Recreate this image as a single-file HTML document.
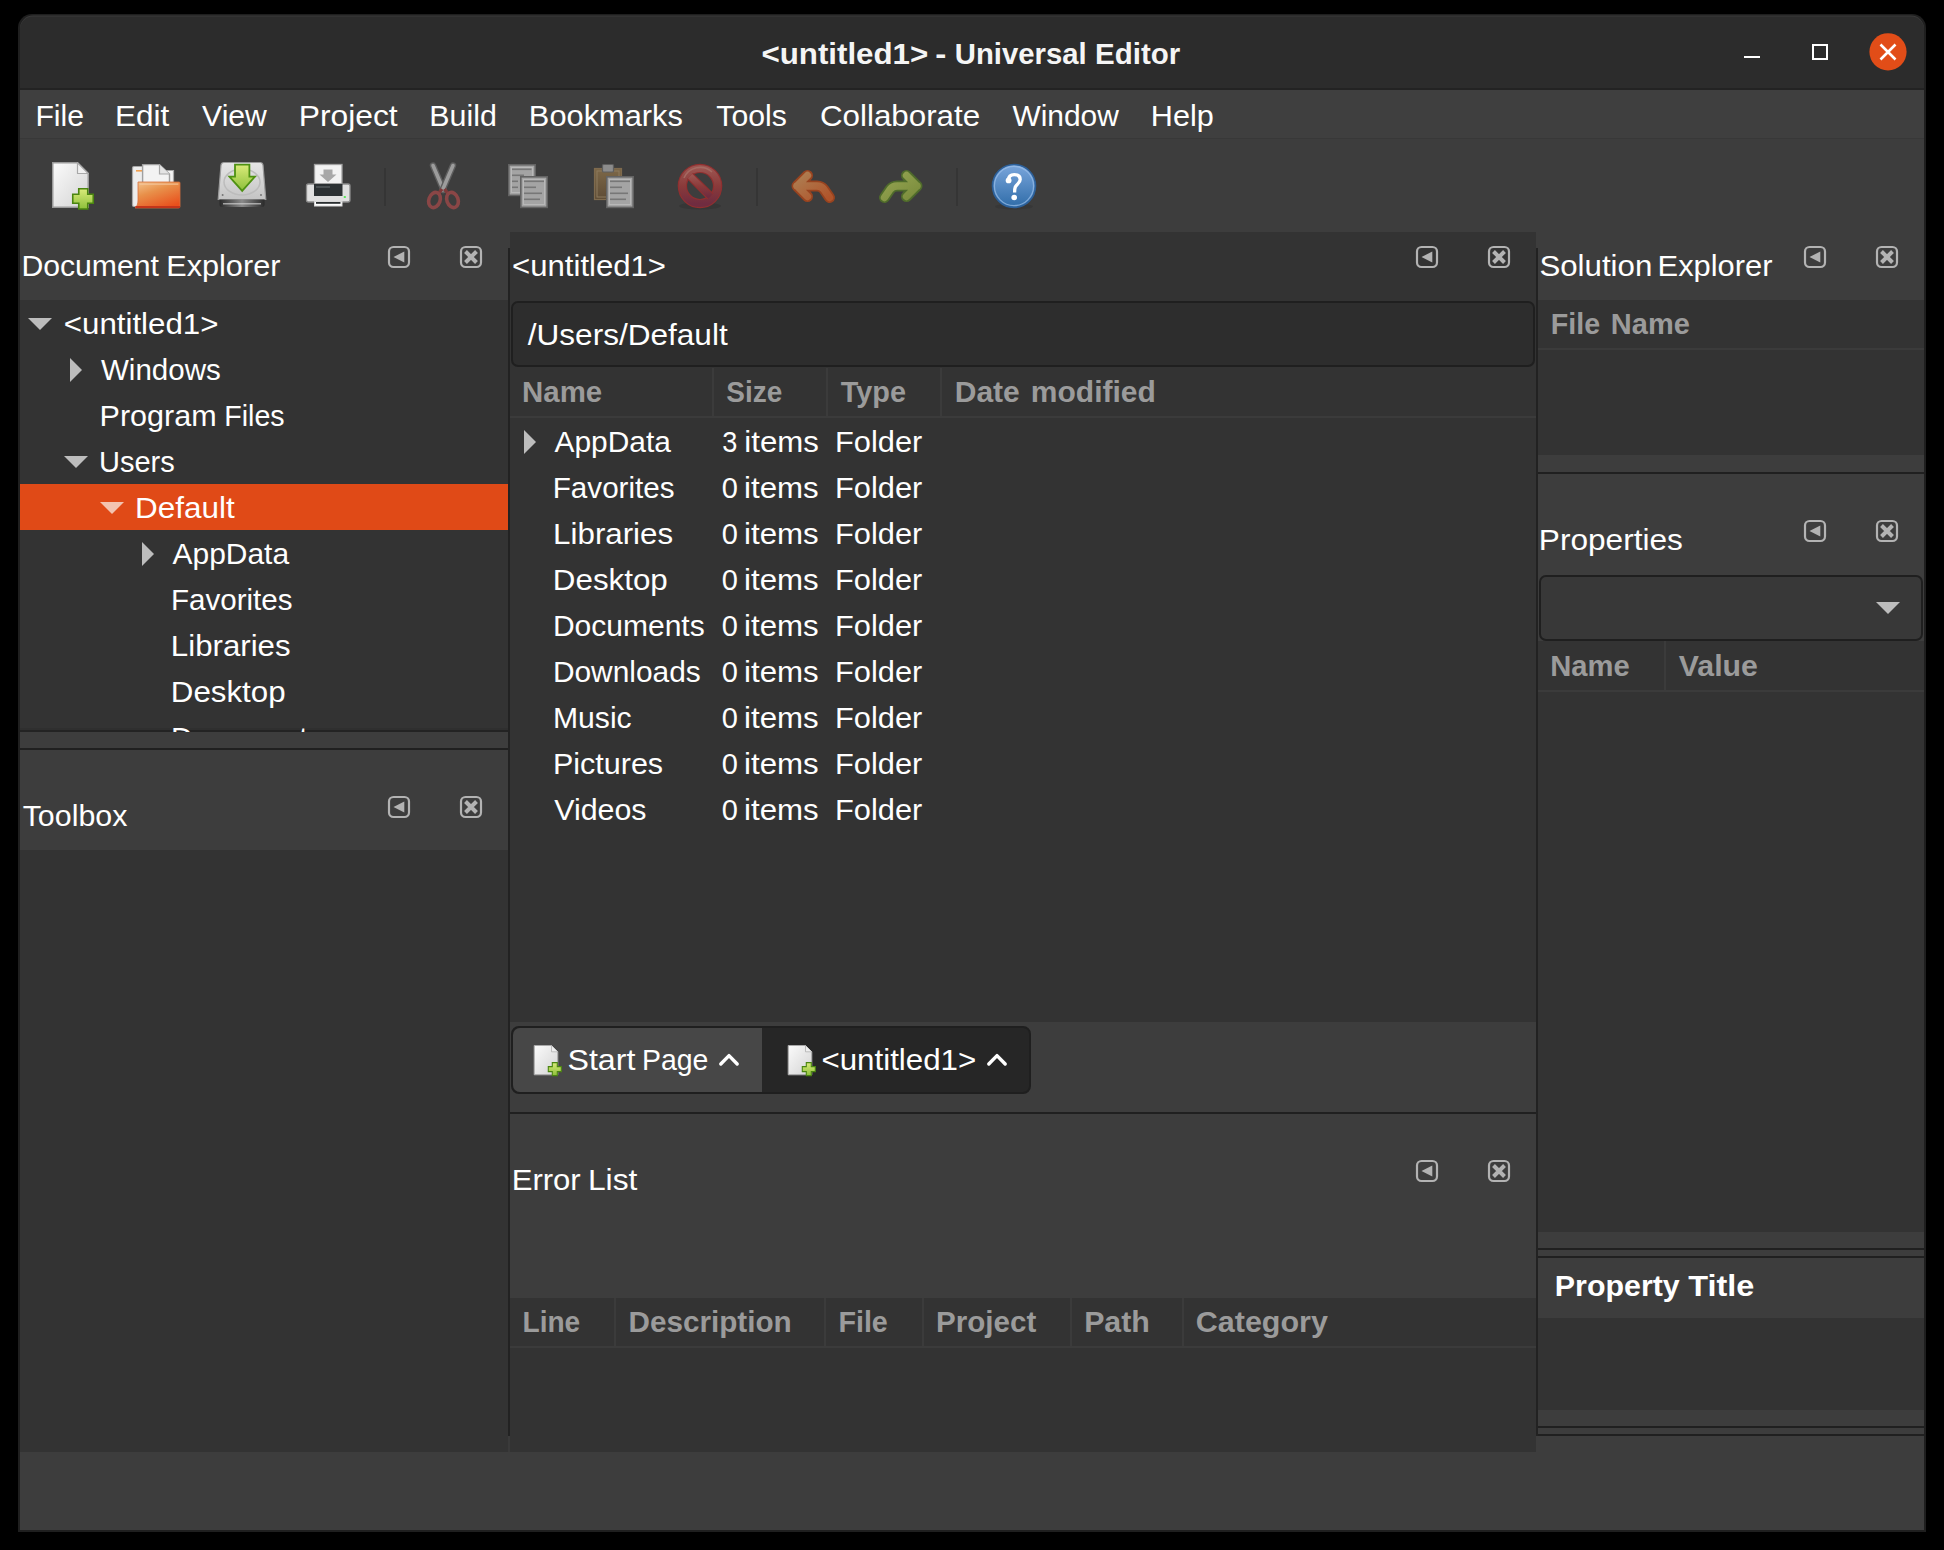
<!DOCTYPE html>
<html><head><meta charset="utf-8"><title>Universal Editor</title>
<style>html,body{margin:0;padding:0;background:#000;overflow:hidden;width:1944px;height:1550px}svg{display:block}</style>
</head><body>
<svg width="1944" height="1550" viewBox="0 0 1944 1550">
<defs><clipPath id="treeclip"><rect x="20" y="300" width="488" height="432"/></clipPath></defs>
<rect x="0" y="0" width="1944" height="1550" fill="#000"/>
<path d="M18,28 a14,14 0 0 1 14,-14 H1912 a14,14 0 0 1 14,14 V1532 H18 Z" fill="#1f1f1f"/>
<path d="M20,29.5 a13,13 0 0 1 13,-14 H1911 a13,13 0 0 1 13,14 V88 H20 Z" fill="#3a3a3a"/>
<path d="M20,30.5 a13,13 0 0 1 13,-14 H1911 a13,13 0 0 1 13,14 V88 H20 Z" fill="#2c2c2c"/>
<rect x="20" y="88" width="1904" height="2" fill="#232323"/>
<rect x="20" y="90" width="1904" height="48" fill="#3f3f3f"/>
<rect x="20" y="138" width="1904" height="1" fill="#383838"/>
<rect x="20" y="139" width="1904" height="1391" fill="#3d3d3d"/>
<rect x="20" y="300" width="488" height="430" fill="#333333"/>
<rect x="20" y="728" width="488" height="2" fill="#2f2f2f"/>
<rect x="20" y="730" width="488" height="2" fill="#232323"/>
<rect x="20" y="748" width="488" height="2" fill="#202020"/>
<rect x="20" y="850" width="488" height="602" fill="#333333"/>
<rect x="20" y="484" width="488" height="46" fill="#e04a17"/>
<rect x="508" y="248" width="2" height="1188" fill="#222222"/>
<rect x="508" y="1436" width="2" height="16" fill="#3a3a3a"/>
<rect x="510" y="232" width="1026" height="790" fill="#333333"/>
<rect x="512" y="302" width="1022" height="64" rx="6" fill="#2d2d2d" stroke="#1f1f1f" stroke-width="2"/>
<rect x="712" y="368" width="2" height="48" fill="#3b3b3b"/>
<rect x="826" y="368" width="2" height="48" fill="#3b3b3b"/>
<rect x="940" y="368" width="2" height="48" fill="#3b3b3b"/>
<rect x="510" y="416" width="1026" height="2" fill="#3b3b3b"/>
<rect x="512" y="1027" width="518" height="66" rx="7" fill="#262626" stroke="#1f1f1f" stroke-width="2"/>
<path d="M762,1028 H520 a7,7 0 0 0 -7,7 V1085 a7,7 0 0 0 7,7 H762 Z" fill="#474747"/>
<rect x="510" y="1112" width="1026" height="2" fill="#202020"/>
<rect x="510" y="1298" width="1026" height="154" fill="#333333"/>
<rect x="614" y="1298" width="2" height="48" fill="#3b3b3b"/>
<rect x="824" y="1298" width="2" height="48" fill="#3b3b3b"/>
<rect x="922" y="1298" width="2" height="48" fill="#3b3b3b"/>
<rect x="1070" y="1298" width="2" height="48" fill="#3b3b3b"/>
<rect x="1182" y="1298" width="2" height="48" fill="#3b3b3b"/>
<rect x="510" y="1346" width="1026" height="2" fill="#3b3b3b"/>
<rect x="1536" y="248" width="2" height="1188" fill="#222222"/>
<rect x="1538" y="300" width="386" height="155" fill="#333333"/>
<rect x="1538" y="348" width="386" height="2" fill="#3b3b3b"/>
<rect x="1538" y="472" width="386" height="2" fill="#202020"/>
<rect x="1540" y="576" width="382" height="64" rx="6" fill="#383838" stroke="#1f1f1f" stroke-width="2"/>
<rect x="1538" y="641" width="386" height="591" fill="#333333"/>
<rect x="1664" y="641" width="2" height="49" fill="#3b3b3b"/>
<rect x="1538" y="690" width="386" height="2" fill="#3b3b3b"/>
<rect x="1538" y="1248" width="386" height="2" fill="#202020"/>
<rect x="1538" y="1256" width="386" height="2" fill="#202020"/>
<rect x="1538" y="1318" width="386" height="92" fill="#333333"/>
<rect x="1538" y="1426" width="386" height="2" fill="#202020"/>
<rect x="1538" y="1434" width="386" height="2" fill="#202020"/>
<rect x="389" y="247" width="20" height="20" rx="4.5" fill="none" stroke="#b3b3b3" stroke-width="2.2"/><path d="M393.5,257 L404.3,251.5 L404.3,262.5 Z" fill="#b3b3b3"/><rect x="461" y="247" width="20" height="20" rx="4.5" fill="none" stroke="#b3b3b3" stroke-width="2.2"/><path d="M465.5,251.5 L476.5,262.5 M476.5,251.5 L465.5,262.5" stroke="#b3b3b3" stroke-width="4"/>
<rect x="389" y="797" width="20" height="20" rx="4.5" fill="none" stroke="#b3b3b3" stroke-width="2.2"/><path d="M393.5,807 L404.3,801.5 L404.3,812.5 Z" fill="#b3b3b3"/><rect x="461" y="797" width="20" height="20" rx="4.5" fill="none" stroke="#b3b3b3" stroke-width="2.2"/><path d="M465.5,801.5 L476.5,812.5 M476.5,801.5 L465.5,812.5" stroke="#b3b3b3" stroke-width="4"/>
<rect x="1417" y="247" width="20" height="20" rx="4.5" fill="none" stroke="#b3b3b3" stroke-width="2.2"/><path d="M1421.5,257 L1432.3,251.5 L1432.3,262.5 Z" fill="#b3b3b3"/><rect x="1489" y="247" width="20" height="20" rx="4.5" fill="none" stroke="#b3b3b3" stroke-width="2.2"/><path d="M1493.5,251.5 L1504.5,262.5 M1504.5,251.5 L1493.5,262.5" stroke="#b3b3b3" stroke-width="4"/>
<rect x="1417" y="1161" width="20" height="20" rx="4.5" fill="none" stroke="#b3b3b3" stroke-width="2.2"/><path d="M1421.5,1171 L1432.3,1165.5 L1432.3,1176.5 Z" fill="#b3b3b3"/><rect x="1489" y="1161" width="20" height="20" rx="4.5" fill="none" stroke="#b3b3b3" stroke-width="2.2"/><path d="M1493.5,1165.5 L1504.5,1176.5 M1504.5,1165.5 L1493.5,1176.5" stroke="#b3b3b3" stroke-width="4"/>
<rect x="1805" y="247" width="20" height="20" rx="4.5" fill="none" stroke="#b3b3b3" stroke-width="2.2"/><path d="M1809.5,257 L1820.3,251.5 L1820.3,262.5 Z" fill="#b3b3b3"/><rect x="1877" y="247" width="20" height="20" rx="4.5" fill="none" stroke="#b3b3b3" stroke-width="2.2"/><path d="M1881.5,251.5 L1892.5,262.5 M1892.5,251.5 L1881.5,262.5" stroke="#b3b3b3" stroke-width="4"/>
<rect x="1805" y="521" width="20" height="20" rx="4.5" fill="none" stroke="#b3b3b3" stroke-width="2.2"/><path d="M1809.5,531 L1820.3,525.5 L1820.3,536.5 Z" fill="#b3b3b3"/><rect x="1877" y="521" width="20" height="20" rx="4.5" fill="none" stroke="#b3b3b3" stroke-width="2.2"/><path d="M1881.5,525.5 L1892.5,536.5 M1892.5,525.5 L1881.5,536.5" stroke="#b3b3b3" stroke-width="4"/>
<path d="M28,318 L52,318 L40,330 Z" fill="#bdbdbd"/>
<path d="M70,358 L82,370 L70,382 Z" fill="#bdbdbd"/>
<path d="M64,456 L88,456 L76,468 Z" fill="#bdbdbd"/>
<path d="M100,502 L124,502 L112,514 Z" fill="#f3c3b0"/>
<path d="M142,542 L154,554 L142,566 Z" fill="#bdbdbd"/>
<path d="M524,430 L536,442 L524,454 Z" fill="#bdbdbd"/>
<path d="M1876,602 L1900,602 L1888,614 Z" fill="#bdbdbd"/>
<rect x="1744" y="56" width="16" height="2" fill="#ffffff"/>
<rect x="1813" y="45" width="14" height="14" fill="none" stroke="#ffffff" stroke-width="2"/>
<circle cx="1888" cy="51.8" r="18.6" fill="#e24d18"/>
<path d="M1880.5,44.5 L1895.5,59.5 M1895.5,44.5 L1880.5,59.5" stroke="#ffffff" stroke-width="2.6"/>
<rect x="384" y="168" width="2" height="38" fill="#353535"/>
<rect x="756" y="168" width="2" height="38" fill="#353535"/>
<rect x="956" y="168" width="2" height="38" fill="#353535"/>
<defs>
<linearGradient id="gPage" x1="0" y1="0" x2="1" y2="1"><stop offset="0" stop-color="#fbfbfb"/><stop offset="1" stop-color="#d3d3d3"/></linearGradient>
<linearGradient id="gGreen" x1="0" y1="0" x2="0" y2="1"><stop offset="0" stop-color="#dbeb7a"/><stop offset="1" stop-color="#8cc03a"/></linearGradient>
<linearGradient id="gOrange" x1="0.1" y1="0" x2="0.7" y2="1"><stop offset="0" stop-color="#f2c088"/><stop offset="0.4" stop-color="#e8904a"/><stop offset="1" stop-color="#e9501c"/></linearGradient>
<linearGradient id="gDrive" x1="0" y1="0" x2="0" y2="1"><stop offset="0" stop-color="#e6e6e6"/><stop offset="1" stop-color="#c4c4c4"/></linearGradient>
<linearGradient id="gSlot" x1="0" y1="0" x2="1" y2="0"><stop offset="0" stop-color="#2a2a2a"/><stop offset="0.5" stop-color="#8a8a8a"/><stop offset="1" stop-color="#2a2a2a"/></linearGradient>
<linearGradient id="gBlue" x1="0" y1="0" x2="0" y2="1"><stop offset="0" stop-color="#7aa6dc"/><stop offset="1" stop-color="#2f6ca8"/></linearGradient>
<linearGradient id="gUndo" x1="0" y1="0" x2="1" y2="1"><stop offset="0" stop-color="#ad7e52"/><stop offset="1" stop-color="#b0542a"/></linearGradient>
<linearGradient id="gRedo" x1="0" y1="0" x2="1" y2="1"><stop offset="0" stop-color="#95a452"/><stop offset="1" stop-color="#7a8c3c"/></linearGradient>
<linearGradient id="gStop" x1="0" y1="0" x2="0" y2="1"><stop offset="0" stop-color="#9c5450"/><stop offset="0.5" stop-color="#8a3a3a"/><stop offset="1" stop-color="#702c40"/></linearGradient>
<linearGradient id="gClip" x1="0" y1="0" x2="0" y2="1"><stop offset="0" stop-color="#7d6848"/><stop offset="1" stop-color="#5e4c36"/></linearGradient>
</defs>
<!-- document-new -->
<g>
<path d="M52.75,162.75 H77.5 L88.25,173.5 V207.25 H52.75 Z" fill="url(#gPage)" stroke="#9a9a9a" stroke-width="1.5"/>
<path d="M77.5,162.75 V173.5 H88.25 Z" fill="#f0f0f0" stroke="#a8a8a8" stroke-width="1.2" stroke-linejoin="round"/>
<path d="M78.75,188.75 h9 v5.5 h5.5 v9 h-5.5 v5.75 h-9 v-5.75 h-6 v-9 h6 z" fill="url(#gGreen)" stroke="#4a8510" stroke-width="1.6"/>
</g>
<!-- document-open -->
<g>
<rect x="132.5" y="166.5" width="14" height="40" rx="1.5" fill="#ededed" stroke="#a8a8a8" stroke-width="1.2"/>
<rect x="136" y="170" width="6" height="1.6" fill="#f0a050"/>
<path d="M162,170.5 H173.5 V200 H162 Z" fill="#f3f3f3" stroke="#a8a8a8" stroke-width="1.2"/>
<path d="M142.6,164.6 H159.5 L169.5,174 V200 H142.6 Z" fill="#f3f3f3" stroke="#a0a0a0" stroke-width="1.4"/>
<path d="M159.5,164.6 V174 H169.5" fill="#e4e4e4" stroke="#a8a8a8" stroke-width="1.2"/>
<path d="M138,182 H179 a1,1 0 0 1 1,1 V206.5 a1.5,1.5 0 0 1 -1.5,1.5 H135 C136.8,206.5 138,204.5 138,200 Z" fill="url(#gOrange)" stroke="#d8703e" stroke-width="0.8"/>
<path d="M139.5,184.2 H178.3" stroke="#f6c8a0" stroke-width="1.2" opacity="0.8"/>
<rect x="135.5" y="206" width="44.5" height="2" fill="#c4351a"/>
</g>
<!-- document-save -->
<g>
<path d="M224,162.5 H260 a3,3 0 0 1 3,2.6 L265.8,199.5 H218.2 L221,165.1 a3,3 0 0 1 3,-2.6 Z" fill="url(#gDrive)" stroke="#9a9a9a" stroke-width="1.2"/>
<ellipse cx="242" cy="182" rx="18" ry="13" fill="none" stroke="#bcbcbc" stroke-width="1.5"/>
<path d="M219.5,199.5 H264.5 V204.5 a2.5,2.5 0 0 1 -2.5,2.5 H222 a2.5,2.5 0 0 1 -2.5,-2.5 Z" fill="url(#gSlot)"/>
<rect x="223" y="203" width="38" height="1.5" fill="#cfcfcf" opacity="0.7"/>
<circle cx="222.6" cy="195" r="1" fill="#777"/><circle cx="261" cy="195" r="1" fill="#777"/>
<path d="M235,164.6 H249.4 V176.6 H255 L242.2,190.8 L229.4,176.6 H235 Z" fill="url(#gGreen)" stroke="#4e9112" stroke-width="1.8" stroke-linejoin="miter"/>
</g>
<!-- print -->
<g>
<rect x="314.5" y="164.5" width="27.5" height="20" fill="#f2f2f2" stroke="#a0a0a0" stroke-width="1.3"/>
<path d="M323.5,169.5 H332.5 V174.5 H336.5 L328,182 L319.5,174.5 H323.5 Z" fill="#a8a8a8"/>
<rect x="306.5" y="184" width="43.5" height="18" rx="2" fill="#e0e0e0" stroke="#8c8c8c" stroke-width="1.3"/>
<rect x="314" y="184" width="28.5" height="12" fill="#2c3133"/>
<rect x="316" y="186" width="14" height="2" fill="#4a5052"/>
<rect x="343.8" y="196" width="2" height="2" fill="#5ce65c"/>
<rect x="314.5" y="201.5" width="27.5" height="4.5" fill="#ffffff" stroke="#d8d8d8" stroke-width="1"/><rect x="316" y="202" width="24.5" height="1.8" fill="#2a2e30"/>
</g>
<!-- cut (insensitive) -->
<g>
<path d="M433,165.5 L443.5,190" stroke="#5e5e5e" stroke-width="6.4" stroke-linecap="round"/>
<path d="M433,165.5 L443.5,190" stroke="#9c9c9c" stroke-width="3.6" stroke-linecap="round"/>
<path d="M453,165.5 L442.5,190" stroke="#5e5e5e" stroke-width="6.4" stroke-linecap="round"/>
<path d="M453,165.5 L442.5,190" stroke="#9c9c9c" stroke-width="3.6" stroke-linecap="round"/>
<path d="M442,189 L437.5,195 M444.5,189 L449,195" stroke="#7e3a3a" stroke-width="3.4"/>
<ellipse cx="434.5" cy="200" rx="5.6" ry="7.8" transform="rotate(20 434.5 200)" fill="none" stroke="#8a4646" stroke-width="3.6"/>
<ellipse cx="452.5" cy="200" rx="5.6" ry="7.8" transform="rotate(-20 452.5 200)" fill="none" stroke="#8a4646" stroke-width="3.6"/>
</g>
<!-- copy -->
<g>
<rect x="508.8" y="164.8" width="26.4" height="30.6" fill="#a4a4a4" stroke="#636363" stroke-width="1.6"/>
<rect x="511.5" y="167.5" width="21" height="25" fill="none" stroke="#b8b8b8" stroke-width="1"/>
<rect x="512" y="168.5" width="19.5" height="1.6" fill="#777"/><rect x="512" y="174.5" width="12" height="1.6" fill="#777"/><rect x="512" y="180.5" width="6" height="1.6" fill="#777"/><rect x="512" y="186.5" width="6" height="1.6" fill="#777"/>
<rect x="520.8" y="176.8" width="26.4" height="30.6" fill="#a4a4a4" stroke="#636363" stroke-width="1.6"/>
<rect x="523.5" y="179.5" width="21" height="25" fill="none" stroke="#b8b8b8" stroke-width="1"/>
<rect x="524" y="180.5" width="20" height="1.6" fill="#777"/><rect x="524" y="186.5" width="12" height="1.6" fill="#777"/><rect x="524" y="192.5" width="18" height="1.6" fill="#777"/><rect x="524" y="198.5" width="16" height="1.6" fill="#777"/>
</g>
<!-- paste -->
<g>
<rect x="594.5" y="168.5" width="27" height="31" fill="url(#gClip)" stroke="#7e6a4e" stroke-width="1.2"/>
<rect x="597" y="171" width="22" height="26" fill="none" stroke="#8c7a5e" stroke-width="1"/>
<rect x="602.5" y="164.5" width="11" height="7.5" rx="1" fill="#8c8c8c" stroke="#5e5e5e" stroke-width="1.2"/>
<rect x="606.8" y="176.8" width="26.4" height="30.6" fill="#a4a4a4" stroke="#636363" stroke-width="1.6"/>
<rect x="609.5" y="179.5" width="21" height="25" fill="none" stroke="#b8b8b8" stroke-width="1"/>
<rect x="610" y="180.5" width="20" height="1.6" fill="#777"/><rect x="610" y="186.5" width="12" height="1.6" fill="#777"/><rect x="610" y="192.5" width="18" height="1.6" fill="#777"/><rect x="610" y="198.5" width="16" height="1.6" fill="#777"/>
</g>
<!-- stop -->
<g>
<ellipse cx="700" cy="206" rx="21" ry="3.5" fill="#353535" opacity="0.8"/>
<circle cx="700" cy="186" r="17.6" fill="none" stroke="#8f2f2f" stroke-width="9.4"/>
<circle cx="700" cy="186" r="17.6" fill="none" stroke="url(#gStop)" stroke-width="7"/>
<path d="M690,176 L710.5,196.5" stroke="#8f2f2f" stroke-width="8.6"/>
<path d="M690,176 L710.5,196.5" stroke="url(#gStop)" stroke-width="6.2"/>
<path d="M684,178 A17.6,17.6 0 0 1 712,172" fill="none" stroke="#a87068" stroke-width="1.6" opacity="0.8"/>
</g>
<!-- undo -->
<g>
<path d="M797,186 L807.5,175.5 M797,186 L807.5,196.5 M797,186 H817 a9,9 0 0 1 7,3.5 L829.5,197.5" fill="none" stroke="#98431f" stroke-width="11" stroke-linecap="round" stroke-linejoin="round"/>
<path d="M797,186 L807.5,175.5 M797,186 L807.5,196.5 M797,186 H817 a9,9 0 0 1 7,3.5 L829.5,197.5" fill="none" stroke="url(#gUndo)" stroke-width="7.4" stroke-linecap="round" stroke-linejoin="round"/>
</g>
<!-- redo -->
<g>
<path d="M917,186 L906.5,175.5 M917,186 L906.5,196.5 M917,186 H897 a9,9 0 0 0 -7,3.5 L884.5,197.5" fill="none" stroke="#4f6b2b" stroke-width="11" stroke-linecap="round" stroke-linejoin="round"/>
<path d="M917,186 L906.5,175.5 M917,186 L906.5,196.5 M917,186 H897 a9,9 0 0 0 -7,3.5 L884.5,197.5" fill="none" stroke="url(#gRedo)" stroke-width="7.4" stroke-linecap="round" stroke-linejoin="round"/>
</g>
<!-- help -->
<g>
<ellipse cx="1014" cy="206.5" rx="19" ry="3" fill="#333" opacity="0.6"/>
<circle cx="1014" cy="186" r="21.5" fill="url(#gBlue)" stroke="#2c5f98" stroke-width="1.6"/>
<circle cx="1014" cy="186" r="19.6" fill="none" stroke="#9cc0ea" stroke-width="1.3" opacity="0.7"/>
<path d="M1008.4,180 C1008.6,176 1011,174.6 1014.2,174.6 C1018.2,174.6 1020.2,176.6 1020.2,179.4 C1020.2,182.8 1016.6,184.2 1015.3,187 C1014.7,188.4 1014.6,190 1014.6,192.4" fill="none" stroke="#ffffff" stroke-width="3.3"/>
<circle cx="1008.6" cy="180.4" r="2.9" fill="#ffffff"/>
<circle cx="1014.2" cy="197.5" r="2.8" fill="#ffffff"/>
</g>
<!-- tab icons -->
<g>
<path d="M534.2,1045.5 H551.5 L557.8,1051.8 V1074.8 H534.2 Z" fill="url(#gPage)" stroke="#a8a8a8" stroke-width="1"/>
<path d="M551.5,1045.5 V1051.8 H557.8" fill="#eee" stroke="#b0b0b0" stroke-width="0.8"/>
<path d="M552.3,1062.6 h5 v4 h4 v5 h-4 v4 h-5 v-4 h-4 v-5 h4 z" fill="url(#gGreen)" stroke="#4a8510" stroke-width="1.1"/>
<path d="M788.2,1045.5 H805.5 L811.8,1051.8 V1074.8 H788.2 Z" fill="url(#gPage)" stroke="#a8a8a8" stroke-width="1"/>
<path d="M805.5,1045.5 V1051.8 H811.8" fill="#eee" stroke="#b0b0b0" stroke-width="0.8"/>
<path d="M806.3,1062.6 h5 v4 h4 v5 h-4 v4 h-5 v-4 h-4 v-5 h4 z" fill="url(#gGreen)" stroke="#4a8510" stroke-width="1.1"/>
<path d="M720.8,1064 L729,1055.6 L737.2,1064" fill="none" stroke="#ffffff" stroke-width="3.4" stroke-linecap="round" stroke-linejoin="round"/>
<path d="M988.8,1064 L997,1055.6 L1005.2,1064" fill="none" stroke="#ffffff" stroke-width="3.4" stroke-linecap="round" stroke-linejoin="round"/>
</g>

<g font-family="'Liberation Sans', sans-serif" font-size="29">
<text x="761.42" y="63.70" font-weight="bold" fill="#f5f5f5" textLength="166.89" lengthAdjust="spacingAndGlyphs">&lt;untitled1&gt;</text>
<text x="935.15" y="63.70" font-weight="bold" fill="#f5f5f5" textLength="11.11" lengthAdjust="spacingAndGlyphs">-</text>
<text x="954.79" y="63.70" font-weight="bold" fill="#f5f5f5" textLength="131.89" lengthAdjust="spacingAndGlyphs">Universal</text>
<text x="1095.08" y="63.70" font-weight="bold" fill="#f5f5f5" textLength="85.21" lengthAdjust="spacingAndGlyphs">Editor</text>
<text x="35.42" y="126.00" font-weight="normal" fill="#ffffff" textLength="48.55" lengthAdjust="spacingAndGlyphs">File</text>
<text x="114.93" y="126.00" font-weight="normal" fill="#ffffff" textLength="54.34" lengthAdjust="spacingAndGlyphs">Edit</text>
<text x="202.10" y="126.00" font-weight="normal" fill="#ffffff" textLength="64.80" lengthAdjust="spacingAndGlyphs">View</text>
<text x="298.71" y="126.00" font-weight="normal" fill="#ffffff" textLength="98.96" lengthAdjust="spacingAndGlyphs">Project</text>
<text x="429.20" y="126.00" font-weight="normal" fill="#ffffff" textLength="67.68" lengthAdjust="spacingAndGlyphs">Build</text>
<text x="528.88" y="126.00" font-weight="normal" fill="#ffffff" textLength="153.95" lengthAdjust="spacingAndGlyphs">Bookmarks</text>
<text x="716.30" y="126.00" font-weight="normal" fill="#ffffff" textLength="70.52" lengthAdjust="spacingAndGlyphs">Tools</text>
<text x="819.92" y="126.00" font-weight="normal" fill="#ffffff" textLength="160.30" lengthAdjust="spacingAndGlyphs">Collaborate</text>
<text x="1012.40" y="126.00" font-weight="normal" fill="#ffffff" textLength="106.51" lengthAdjust="spacingAndGlyphs">Window</text>
<text x="1150.89" y="126.00" font-weight="normal" fill="#ffffff" textLength="62.90" lengthAdjust="spacingAndGlyphs">Help</text>
<text x="21.42" y="276.00" font-weight="normal" fill="#ffffff" textLength="137.54" lengthAdjust="spacingAndGlyphs">Document</text>
<text x="166.18" y="276.00" font-weight="normal" fill="#ffffff" textLength="114.25" lengthAdjust="spacingAndGlyphs">Explorer</text>
<text x="512.13" y="276.00" font-weight="normal" fill="#ffffff" textLength="153.88" lengthAdjust="spacingAndGlyphs">&lt;untitled1&gt;</text>
<text x="1539.42" y="275.70" font-weight="normal" fill="#ffffff" textLength="112.89" lengthAdjust="spacingAndGlyphs">Solution</text>
<text x="1657.57" y="275.70" font-weight="normal" fill="#ffffff" textLength="114.96" lengthAdjust="spacingAndGlyphs">Explorer</text>
<text x="22.70" y="826.00" font-weight="normal" fill="#ffffff" textLength="104.68" lengthAdjust="spacingAndGlyphs">Toolbox</text>
<text x="1538.82" y="550.00" font-weight="normal" fill="#ffffff" textLength="144.02" lengthAdjust="spacingAndGlyphs">Properties</text>
<text x="511.66" y="1190.00" font-weight="normal" fill="#ffffff" textLength="69.08" lengthAdjust="spacingAndGlyphs">Error</text>
<text x="587.91" y="1190.00" font-weight="normal" fill="#ffffff" textLength="49.45" lengthAdjust="spacingAndGlyphs">List</text>
<text x="527.80" y="344.50" font-weight="normal" fill="#ffffff" textLength="199.86" lengthAdjust="spacingAndGlyphs">/Users/Default</text>
<text x="522.09" y="401.50" font-weight="bold" fill="#9b9b9b" textLength="80.14" lengthAdjust="spacingAndGlyphs">Name</text>
<text x="726.30" y="401.50" font-weight="bold" fill="#9b9b9b" textLength="55.92" lengthAdjust="spacingAndGlyphs">Size</text>
<text x="840.80" y="401.50" font-weight="bold" fill="#9b9b9b" textLength="65.23" lengthAdjust="spacingAndGlyphs">Type</text>
<text x="954.76" y="401.80" font-weight="bold" fill="#9b9b9b" textLength="65.07" lengthAdjust="spacingAndGlyphs">Date</text>
<text x="1030.87" y="401.80" font-weight="bold" fill="#9b9b9b" textLength="125.01" lengthAdjust="spacingAndGlyphs">modified</text>
<text x="1550.81" y="333.90" font-weight="bold" fill="#9b9b9b" textLength="49.31" lengthAdjust="spacingAndGlyphs">File</text>
<text x="1610.80" y="333.90" font-weight="bold" fill="#9b9b9b" textLength="79.03" lengthAdjust="spacingAndGlyphs">Name</text>
<text x="1550.29" y="676.00" font-weight="bold" fill="#9b9b9b" textLength="79.54" lengthAdjust="spacingAndGlyphs">Name</text>
<text x="1678.80" y="676.00" font-weight="bold" fill="#9b9b9b" textLength="79.13" lengthAdjust="spacingAndGlyphs">Value</text>
<text x="522.53" y="1332.00" font-weight="bold" fill="#9b9b9b" textLength="57.69" lengthAdjust="spacingAndGlyphs">Line</text>
<text x="628.48" y="1332.00" font-weight="bold" fill="#9b9b9b" textLength="163.28" lengthAdjust="spacingAndGlyphs">Description</text>
<text x="838.41" y="1332.00" font-weight="bold" fill="#9b9b9b" textLength="49.42" lengthAdjust="spacingAndGlyphs">File</text>
<text x="935.98" y="1332.00" font-weight="bold" fill="#9b9b9b" textLength="100.27" lengthAdjust="spacingAndGlyphs">Project</text>
<text x="1084.15" y="1332.00" font-weight="bold" fill="#9b9b9b" textLength="65.74" lengthAdjust="spacingAndGlyphs">Path</text>
<text x="1195.75" y="1332.00" font-weight="bold" fill="#9b9b9b" textLength="132.19" lengthAdjust="spacingAndGlyphs">Category</text>
<text x="1554.85" y="1296.00" font-weight="bold" fill="#ffffff" textLength="124.88" lengthAdjust="spacingAndGlyphs">Property</text>
<text x="1688.30" y="1296.00" font-weight="bold" fill="#ffffff" textLength="66.04" lengthAdjust="spacingAndGlyphs">Title</text>
<text x="99.60" y="426.00" font-weight="normal" fill="#ffffff" textLength="117.02" lengthAdjust="spacingAndGlyphs">Program</text>
<text x="224.23" y="426.00" font-weight="normal" fill="#ffffff" textLength="60.36" lengthAdjust="spacingAndGlyphs">Files</text>
<text x="63.72" y="334.00" font-weight="normal" fill="#ffffff" textLength="154.79" lengthAdjust="spacingAndGlyphs">&lt;untitled1&gt;</text>
<text x="101.00" y="380.00" font-weight="normal" fill="#ffffff" textLength="119.81" lengthAdjust="spacingAndGlyphs">Windows</text>
<text x="99.00" y="472.00" font-weight="normal" fill="#ffffff" textLength="75.80" lengthAdjust="spacingAndGlyphs">Users</text>
<text x="135.13" y="518.00" font-weight="normal" fill="#ffffff" textLength="99.73" lengthAdjust="spacingAndGlyphs">Default</text>
<text x="172.50" y="564.00" font-weight="normal" fill="#ffffff" textLength="116.60" lengthAdjust="spacingAndGlyphs">AppData</text>
<text x="170.96" y="610.00" font-weight="normal" fill="#ffffff" textLength="121.55" lengthAdjust="spacingAndGlyphs">Favorites</text>
<text x="170.85" y="656.00" font-weight="normal" fill="#ffffff" textLength="119.69" lengthAdjust="spacingAndGlyphs">Libraries</text>
<text x="170.84" y="702.00" font-weight="normal" fill="#ffffff" textLength="114.78" lengthAdjust="spacingAndGlyphs">Desktop</text>
<text x="170.93" y="748.00" font-weight="normal" fill="#ffffff" textLength="151.79" lengthAdjust="spacingAndGlyphs" clip-path="url(#treeclip)">Documents</text>
<text x="554.50" y="451.50" font-weight="normal" fill="#ffffff" textLength="116.40" lengthAdjust="spacingAndGlyphs">AppData</text>
<text x="722.26" y="451.50" font-weight="normal" fill="#ffffff" textLength="15.09" lengthAdjust="spacingAndGlyphs">3</text>
<text x="744.32" y="451.50" font-weight="normal" fill="#ffffff" textLength="74.51" lengthAdjust="spacingAndGlyphs">items</text>
<text x="835.08" y="451.50" font-weight="normal" fill="#ffffff" textLength="87.16" lengthAdjust="spacingAndGlyphs">Folder</text>
<text x="552.76" y="497.50" font-weight="normal" fill="#ffffff" textLength="121.85" lengthAdjust="spacingAndGlyphs">Favorites</text>
<text x="721.80" y="497.50" font-weight="normal" fill="#ffffff" textLength="16.13" lengthAdjust="spacingAndGlyphs">0</text>
<text x="744.12" y="497.50" font-weight="normal" fill="#ffffff" textLength="74.62" lengthAdjust="spacingAndGlyphs">items</text>
<text x="835.08" y="497.50" font-weight="normal" fill="#ffffff" textLength="87.16" lengthAdjust="spacingAndGlyphs">Folder</text>
<text x="553.14" y="543.50" font-weight="normal" fill="#ffffff" textLength="120.00" lengthAdjust="spacingAndGlyphs">Libraries</text>
<text x="721.80" y="543.50" font-weight="normal" fill="#ffffff" textLength="16.13" lengthAdjust="spacingAndGlyphs">0</text>
<text x="744.12" y="543.50" font-weight="normal" fill="#ffffff" textLength="74.62" lengthAdjust="spacingAndGlyphs">items</text>
<text x="835.08" y="543.50" font-weight="normal" fill="#ffffff" textLength="87.16" lengthAdjust="spacingAndGlyphs">Folder</text>
<text x="552.84" y="589.50" font-weight="normal" fill="#ffffff" textLength="114.98" lengthAdjust="spacingAndGlyphs">Desktop</text>
<text x="721.80" y="589.50" font-weight="normal" fill="#ffffff" textLength="16.13" lengthAdjust="spacingAndGlyphs">0</text>
<text x="744.12" y="589.50" font-weight="normal" fill="#ffffff" textLength="74.62" lengthAdjust="spacingAndGlyphs">items</text>
<text x="835.08" y="589.50" font-weight="normal" fill="#ffffff" textLength="87.16" lengthAdjust="spacingAndGlyphs">Folder</text>
<text x="552.93" y="635.50" font-weight="normal" fill="#ffffff" textLength="151.79" lengthAdjust="spacingAndGlyphs">Documents</text>
<text x="721.80" y="635.50" font-weight="normal" fill="#ffffff" textLength="16.13" lengthAdjust="spacingAndGlyphs">0</text>
<text x="744.12" y="635.50" font-weight="normal" fill="#ffffff" textLength="74.62" lengthAdjust="spacingAndGlyphs">items</text>
<text x="835.08" y="635.50" font-weight="normal" fill="#ffffff" textLength="87.16" lengthAdjust="spacingAndGlyphs">Folder</text>
<text x="552.94" y="681.50" font-weight="normal" fill="#ffffff" textLength="147.78" lengthAdjust="spacingAndGlyphs">Downloads</text>
<text x="721.80" y="681.50" font-weight="normal" fill="#ffffff" textLength="16.13" lengthAdjust="spacingAndGlyphs">0</text>
<text x="744.12" y="681.50" font-weight="normal" fill="#ffffff" textLength="74.62" lengthAdjust="spacingAndGlyphs">items</text>
<text x="835.08" y="681.50" font-weight="normal" fill="#ffffff" textLength="87.16" lengthAdjust="spacingAndGlyphs">Folder</text>
<text x="552.92" y="727.50" font-weight="normal" fill="#ffffff" textLength="78.80" lengthAdjust="spacingAndGlyphs">Music</text>
<text x="721.80" y="727.50" font-weight="normal" fill="#ffffff" textLength="16.13" lengthAdjust="spacingAndGlyphs">0</text>
<text x="744.12" y="727.50" font-weight="normal" fill="#ffffff" textLength="74.62" lengthAdjust="spacingAndGlyphs">items</text>
<text x="835.08" y="727.50" font-weight="normal" fill="#ffffff" textLength="87.16" lengthAdjust="spacingAndGlyphs">Folder</text>
<text x="552.90" y="773.50" font-weight="normal" fill="#ffffff" textLength="110.23" lengthAdjust="spacingAndGlyphs">Pictures</text>
<text x="721.80" y="773.50" font-weight="normal" fill="#ffffff" textLength="16.13" lengthAdjust="spacingAndGlyphs">0</text>
<text x="744.12" y="773.50" font-weight="normal" fill="#ffffff" textLength="74.62" lengthAdjust="spacingAndGlyphs">items</text>
<text x="835.08" y="773.50" font-weight="normal" fill="#ffffff" textLength="87.16" lengthAdjust="spacingAndGlyphs">Folder</text>
<text x="554.20" y="819.50" font-weight="normal" fill="#ffffff" textLength="92.32" lengthAdjust="spacingAndGlyphs">Videos</text>
<text x="721.80" y="819.50" font-weight="normal" fill="#ffffff" textLength="16.13" lengthAdjust="spacingAndGlyphs">0</text>
<text x="744.12" y="819.50" font-weight="normal" fill="#ffffff" textLength="74.62" lengthAdjust="spacingAndGlyphs">items</text>
<text x="835.08" y="819.50" font-weight="normal" fill="#ffffff" textLength="87.16" lengthAdjust="spacingAndGlyphs">Folder</text>
<text x="567.49" y="1070.00" font-weight="normal" fill="#ffffff" textLength="67.87" lengthAdjust="spacingAndGlyphs">Start</text>
<text x="642.04" y="1070.00" font-weight="normal" fill="#ffffff" textLength="66.37" lengthAdjust="spacingAndGlyphs">Page</text>
<text x="821.42" y="1070.00" font-weight="normal" fill="#ffffff" textLength="154.89" lengthAdjust="spacingAndGlyphs">&lt;untitled1&gt;</text>
</g>
</svg>
</body></html>
